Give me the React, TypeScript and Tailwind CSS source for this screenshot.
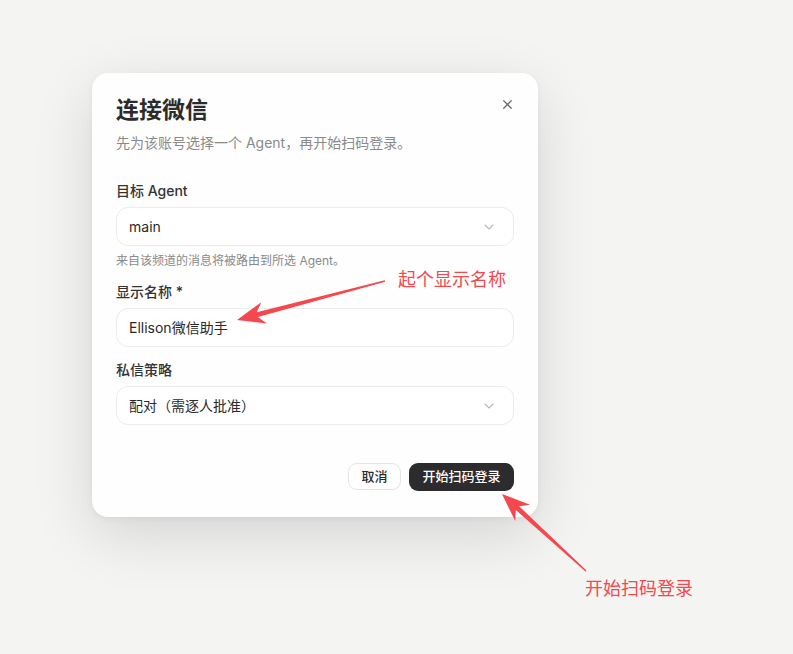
import React from "react";
import { ChevronDown, X } from "lucide-react";

type P = [number, number];

function arrowPoints(tail: P, tip: P, headLen: number, headHalf: number, tailW: number, neckW: number): string {
  const dx = tip[0] - tail[0];
  const dy = tip[1] - tail[1];
  const len = Math.hypot(dx, dy);
  const ux = dx / len;
  const uy = dy / len;
  const nx = -uy;
  const ny = ux;
  const base: P = [tip[0] - ux * headLen, tip[1] - uy * headLen];
  const neck: P = [tip[0] - ux * headLen * 0.75, tip[1] - uy * headLen * 0.75];
  const pts: P[] = [
    [tail[0] + nx * tailW / 2, tail[1] + ny * tailW / 2],
    [neck[0] + nx * neckW / 2, neck[1] + ny * neckW / 2],
    [base[0] + nx * headHalf, base[1] + ny * headHalf],
    tip,
    [base[0] - nx * headHalf, base[1] - ny * headHalf],
    [neck[0] - nx * neckW / 2, neck[1] - ny * neckW / 2],
    [tail[0] - nx * tailW / 2, tail[1] - ny * tailW / 2],
  ];
  return pts.map((p) => `${p[0].toFixed(1)},${p[1].toFixed(1)}`).join(" ");
}

function Field({ children }: { children: React.ReactNode }) {
  return (
    <div className="flex h-[39px] items-center justify-between rounded-[12px] border border-[#ebebea] bg-white pl-3 pr-4 text-[14px] text-[#2a2a2a]">
      {children}
    </div>
  );
}

export default function App() {
  return (
    <div
      className="relative h-[654px] w-[793px] overflow-hidden bg-[#f4f4f3]"
      style={{ fontFamily: 'Inter, "Noto Sans CJK SC", sans-serif' }}
    >
      <div className="pl-[92px] pt-[73px]">
        <div className="flex h-[444px] w-[446px] flex-col rounded-[16px] bg-[#fefefe] px-6 pt-[21px] pb-[26px] shadow-[0_18px_60px_rgba(0,0,0,0.13),0_2px_6px_rgba(0,0,0,0.05)]">
          <div className="flex items-start justify-between">
            <div className="text-[23px] font-bold leading-[32px] text-[#2b2b2b]">连接微信</div>
            <X className="mr-[-1px] mt-[3px] h-[15px] w-[15px] text-[#6b6b6b]" strokeWidth={2} />
          </div>
          <div className="mt-[7px] text-[14px] leading-[20px] text-[#8a8a8a]">
            先为该账号选择一个 Agent，再开始扫码登录。
          </div>

          <div className="mt-[28px] text-[14px] font-medium leading-[20px] text-[#333]">目标 Agent</div>
          <div className="mt-[6px]">
            <Field>
              <span>main</span>
              <ChevronDown className="h-4 w-4 text-[#b8b8b8]" strokeWidth={1.6} />
            </Field>
          </div>
          <div className="mt-[6px] text-[12px] leading-[17px] text-[#8a8a8a]">来自该频道的消息将被路由到所选 Agent。</div>

          <div className="mt-[13px] text-[14px] font-medium leading-[20px] text-[#333]">显示名称 *</div>
          <div className="mt-[6px]">
            <Field>
              <span>Ellison微信助手</span>
            </Field>
          </div>

          <div className="mt-[13px] text-[14px] font-medium leading-[20px] text-[#333]">私信策略</div>
          <div className="mt-[6px]">
            <Field>
              <span>配对（需逐人批准）</span>
              <ChevronDown className="h-4 w-4 text-[#b8b8b8]" strokeWidth={1.6} />
            </Field>
          </div>

          <div className="mt-auto flex justify-end gap-2">
            <button className="h-[27px] w-[53px] rounded-[9px] border border-[#e4e4e2] bg-white text-[13px] font-medium text-[#2b2b2b]">
              取消
            </button>
            <button className="h-[28px] w-[105px] rounded-[9px] bg-[#2c2c2e] text-[13px] font-medium text-white">
              开始扫码登录
            </button>
          </div>
        </div>
      </div>

      <svg className="pointer-events-none absolute left-0 top-0" width={793} height={654}>
        <polygon points={arrowPoints([385, 281], [237, 320], 28, 11, 1.5, 5)} fill="#f5474e" />
        <polygon points={arrowPoints([586, 571], [502, 494], 28, 11, 1.5, 5)} fill="#f5474e" />
      </svg>
      <div className="absolute left-[398px] top-[268px] text-[18px] leading-[24px] text-[#f5474e]">起个显示名称</div>
      <div className="absolute left-[585px] top-[577px] text-[18px] leading-[24px] text-[#f5474e]">开始扫码登录</div>
    </div>
  );
}
